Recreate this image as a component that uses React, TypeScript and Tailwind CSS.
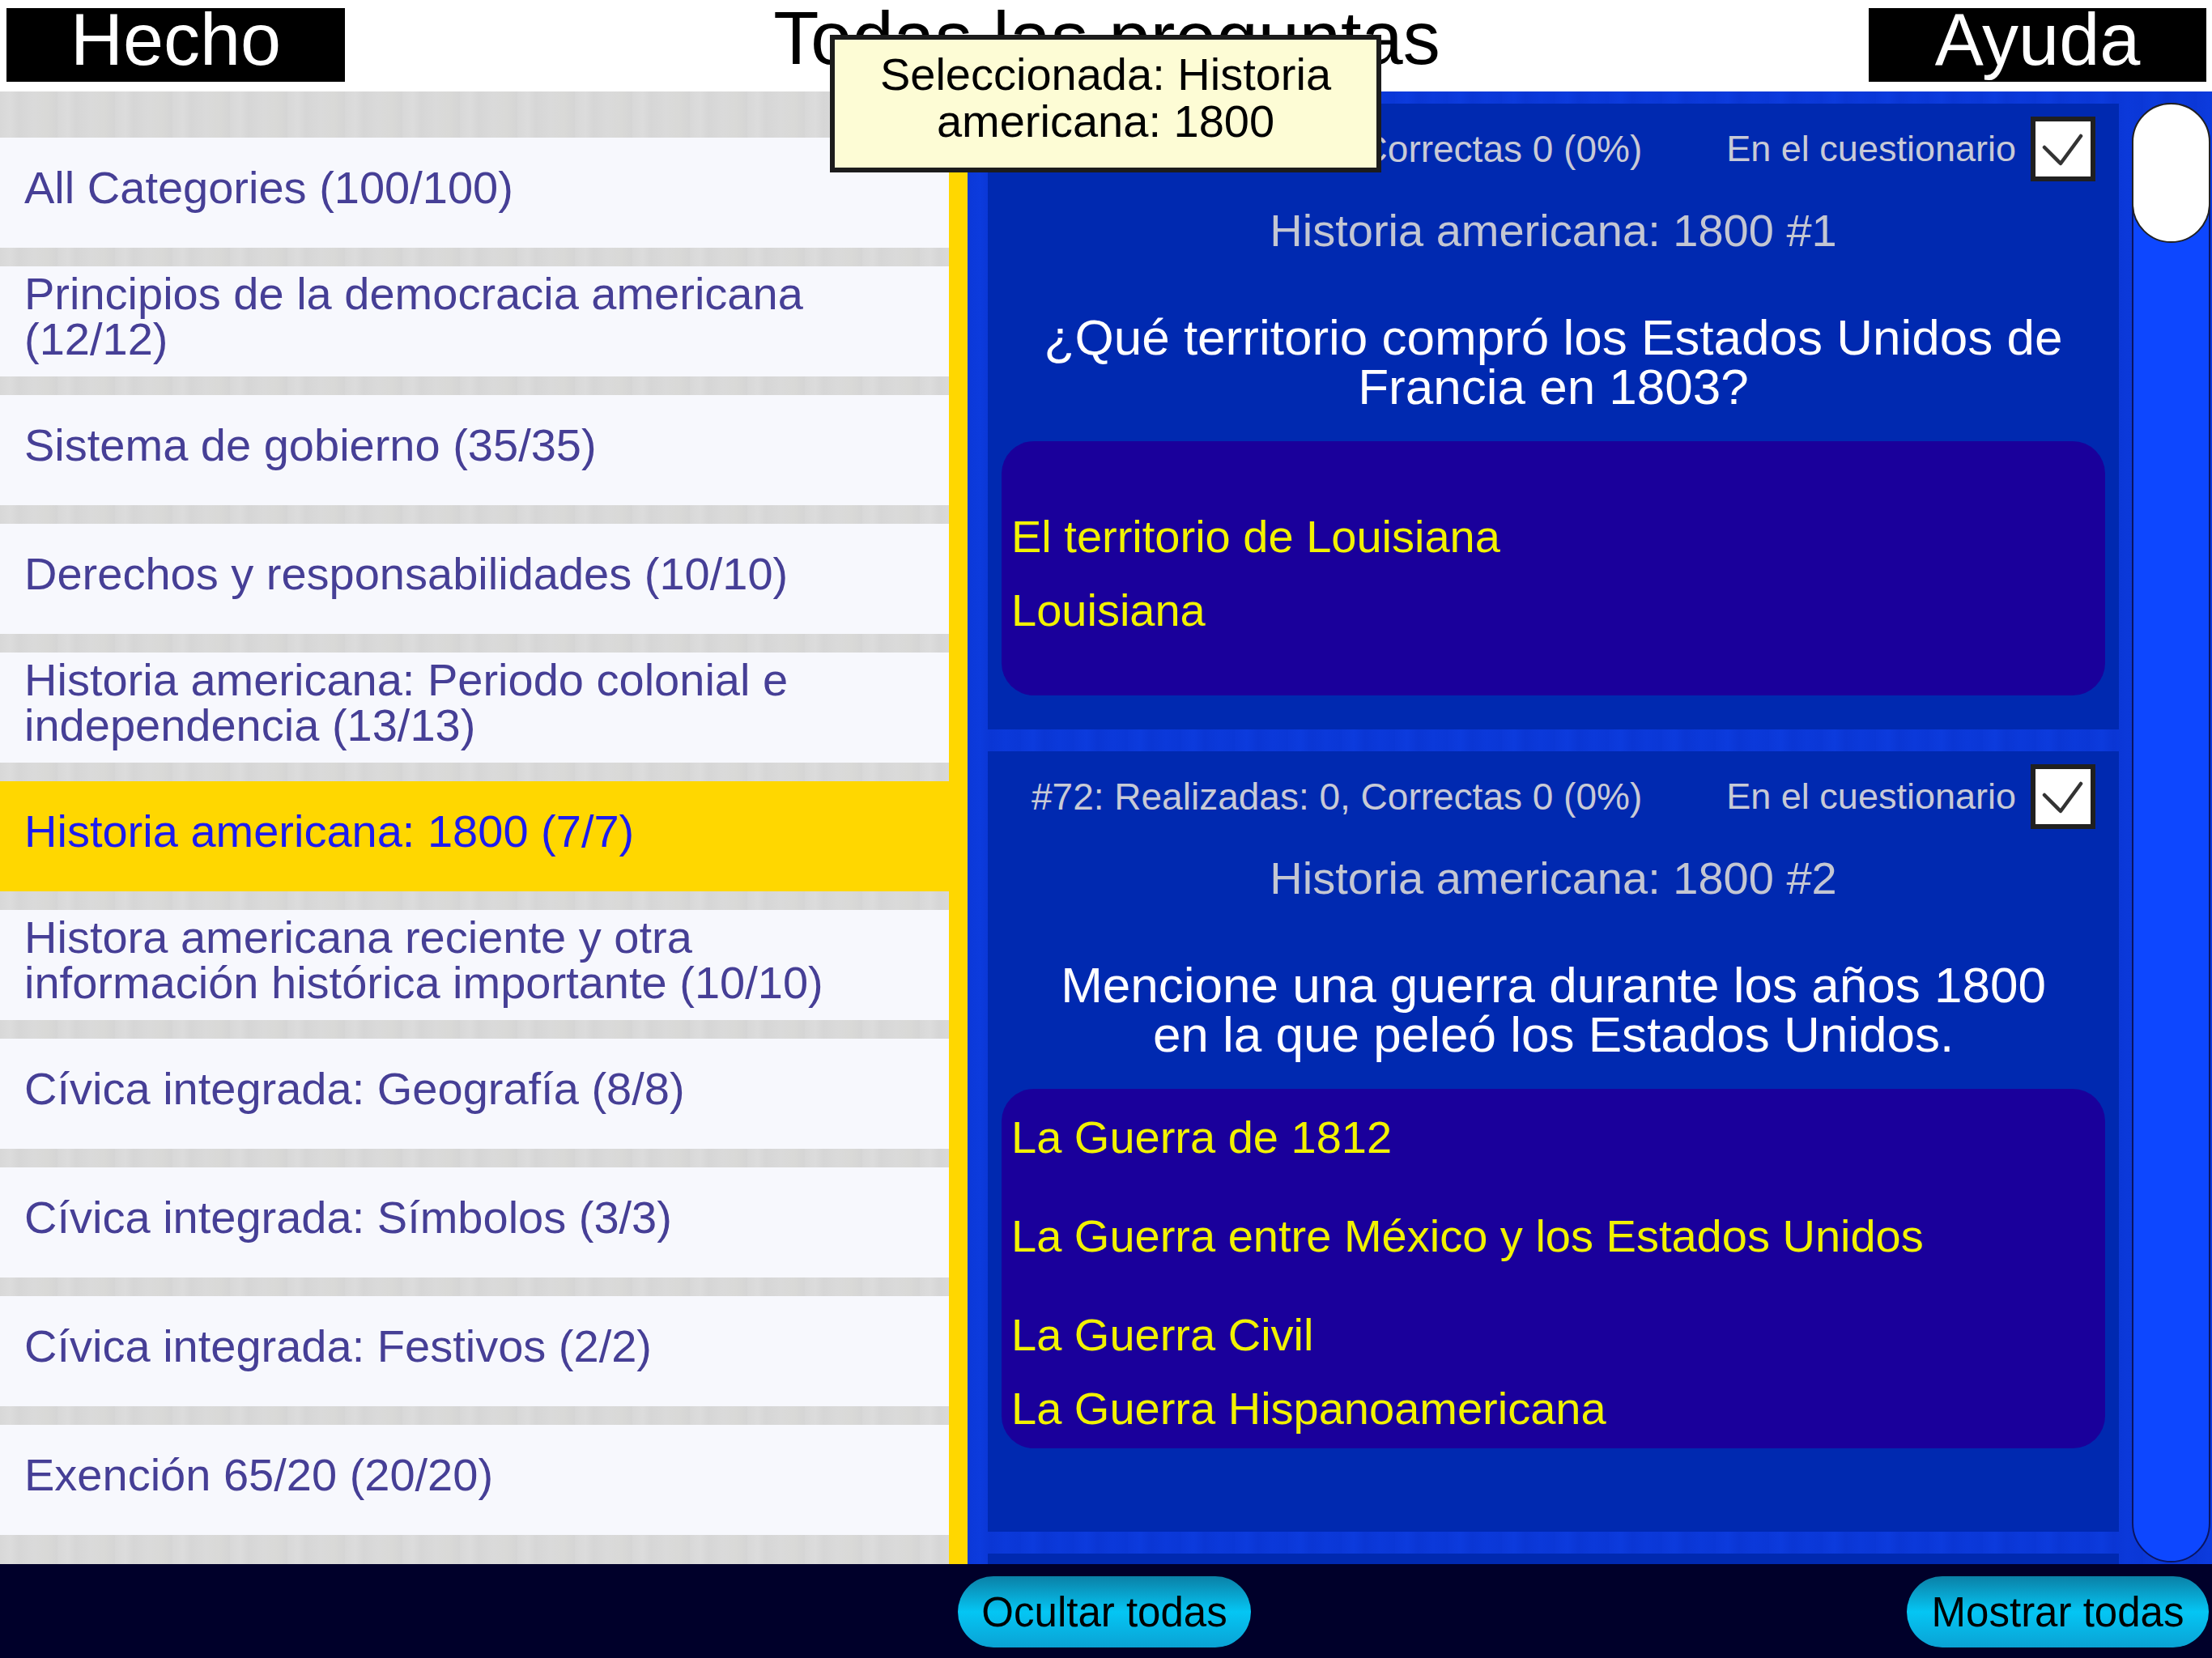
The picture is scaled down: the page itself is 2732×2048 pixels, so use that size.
import React from "react";

const rows = [
  ["All Categories (100/100)"],
  ["Principios de la democracia americana", "(12/12)"],
  ["Sistema de gobierno (35/35)"],
  ["Derechos y responsabilidades (10/10)"],
  ["Historia americana: Periodo colonial e", "independencia (13/13)"],
  ["Historia americana: 1800 (7/7)"],
  ["Histora americana reciente y otra", "información histórica importante (10/10)"],
  ["Cívica integrada: Geografía (8/8)"],
  ["Cívica integrada: Símbolos (3/3)"],
  ["Cívica integrada: Festivos (2/2)"],
  ["Exención 65/20 (20/20)"],
];

const selected = 5;

const cards = [
  {
    stats: "#71: Realizadas: 0, Correctas 0 (0%)",
    title: "Historia americana: 1800 #1",
    question: "¿Qué territorio compró los Estados Unidos de Francia en 1803?",
    answers: [
      { text: "El territorio de Louisiana", gap: "" },
      { text: "Louisiana", gap: "" },
    ],
    cardH: "h-[773px]",
    boxH: "h-[314px] pt-[72px]",
  },
  {
    stats: "#72: Realizadas: 0, Correctas 0 (0%)",
    title: "Historia americana: 1800 #2",
    question: "Mencione una guerra durante los años 1800 en la que peleó los Estados Unidos.",
    answers: [
      { text: "La Guerra de 1812", gap: "mb-[31px]" },
      { text: "La Guerra entre México y los Estados Unidos", gap: "mb-[31px]" },
      { text: "La Guerra Civil", gap: "" },
      { text: "La Guerra Hispanoamericana", gap: "" },
    ],
    cardH: "h-[964px]",
    boxH: "h-[444px] pt-[14px]",
  },
];

function CheckBox() {
  return (
    <div className="w-[80px] h-[80px] border-[6px] border-[#202020] bg-white flex items-center justify-center shrink-0">
      <svg width="68" height="68" viewBox="0 0 68 68">
        <polyline
          points="11,32 31,52 56,18"
          fill="none"
          stroke="#333"
          strokeWidth="4.5"
          strokeLinecap="round"
          strokeLinejoin="round"
        />
      </svg>
    </div>
  );
}

function QuestionCard({ card }: { card: (typeof cards)[number] }) {
  return (
    <div className={`${card.cardH} w-[1397px] shrink-0 bg-[#0029b0] flex flex-col`}>
      <div className="flex items-center h-[80px] mt-[16px] pl-[54px] pr-[29px] text-[#c8cad6]">
        <span className="text-[46px]">{card.stats}</span>
        <span className="ml-auto mr-[18px] text-[45px]">En el cuestionario</span>
        <CheckBox />
      </div>
      <div className="mt-[33px] text-center text-[56px] leading-[56px] text-[#c3c6d2]">{card.title}</div>
      <div className="mt-[73px] px-[63px] text-center text-[62px] leading-[61px] text-white">{card.question}</div>
      <div className={`mt-[37px] mx-[17px] ${card.boxH} rounded-[40px] bg-[#1a009b] pl-[12px] flex flex-col`}>
        {card.answers.map((a) => (
          <div key={a.text} className={`h-[91px] leading-[91px] text-[56px] text-[#f2f200] ${a.gap}`}>
            {a.text}
          </div>
        ))}
      </div>
    </div>
  );
}

export default function App() {
  return (
    <div className="relative w-[2732px] h-[2048px] overflow-hidden flex flex-col bg-white font-['Liberation_Sans',Arial,sans-serif]">
      {/* header */}
      <header className="h-[113px] shrink-0 bg-white flex items-start pt-[10px] pl-[8px] pr-[7px]">
        <button className="w-[418px] h-[91px] bg-black text-white text-[90px] leading-none flex items-center justify-center pb-[14px]">
          Hecho
        </button>
        <h1 className="flex-1 text-center text-black text-[92px] leading-none -mt-[9px]">Todas las preguntas</h1>
        <button className="w-[417px] h-[91px] bg-black text-white text-[90px] leading-none flex items-center justify-center pb-[14px]">
          Ayuda
        </button>
      </header>

      <main className="h-[1819px] shrink-0 flex">
        {/* category list */}
        <div className="w-[1172px] shrink-0 flex flex-col gap-[23px] pt-[57px] bg-[repeating-linear-gradient(90deg,#d8d8d8_0px,#dcdcdc_13px,#d6d6d6_23px,#dadada_41px,#d9d9d7_58px,#d5d5d5_71px)]">
          {rows.map((lines, i) => (
            <div
              key={i}
              className={`h-[136px] shrink-0 flex flex-col justify-center pl-[30px] pb-[12px] text-[56px] leading-[56px] ${
                i === selected ? "bg-[#ffd700] text-[#1c1cf0]" : "bg-[#f7f8fd] text-[#463f96]"
              }`}
            >
              {lines.map((l) => (
                <span key={l}>{l}</span>
              ))}
            </div>
          ))}
        </div>
        <div className="w-[23px] shrink-0 bg-[#ffd700]" />

        {/* questions panel */}
        <div className="flex-1 flex overflow-hidden pl-[25px] bg-[repeating-linear-gradient(90deg,#0b38d8_0px,#0c3bdd_15px,#0a36d4_29px,#0b39da_47px,#0a37d6_66px)]">
          <div className="flex flex-col gap-[27px] pt-[15px] shrink-0">
            {cards.map((c) => (
              <QuestionCard key={c.stats} card={c} />
            ))}
            <div className="h-[773px] w-[1397px] shrink-0 bg-[#0029b0]" />
          </div>
          <div className="relative ml-[16px] mt-[14px] mb-[2px] w-[97px] shrink-0 rounded-full bg-[#0d47ff] border-2 border-[#0a1560]">
            <div className="absolute -left-[2px] -top-[2px] w-[97px] h-[173px] rounded-full bg-white border-2 border-[#222]" />
          </div>
        </div>
      </main>

      {/* bottom bar */}
      <footer className="flex-1 bg-[#00002a] grid grid-cols-[1fr_auto_1fr] items-start pt-[15px] pr-[4px]">
        <div />
        <button className="w-[362px] h-[88px] rounded-full bg-gradient-to-b from-[#0a80a6] via-[#04c6f4] to-[#0aa2d4] text-black text-[51px] leading-none">
          Ocultar todas
        </button>
        <div className="flex justify-end">
          <button className="w-[373px] h-[88px] rounded-full bg-gradient-to-b from-[#0a80a6] via-[#04c6f4] to-[#0aa2d4] text-black text-[51px] leading-none">
            Mostrar todas
          </button>
        </div>
      </footer>

      {/* tooltip */}
      <div className="absolute left-[1025px] top-[43px] w-[681px] h-[170px] border-[6px] border-[#1c1c1c] bg-[#fdfcd5] flex flex-col items-center pt-[14px] text-black text-[56px] leading-[58px]">
        <span>Seleccionada: Historia</span>
        <span>americana: 1800</span>
      </div>
    </div>
  );
}
